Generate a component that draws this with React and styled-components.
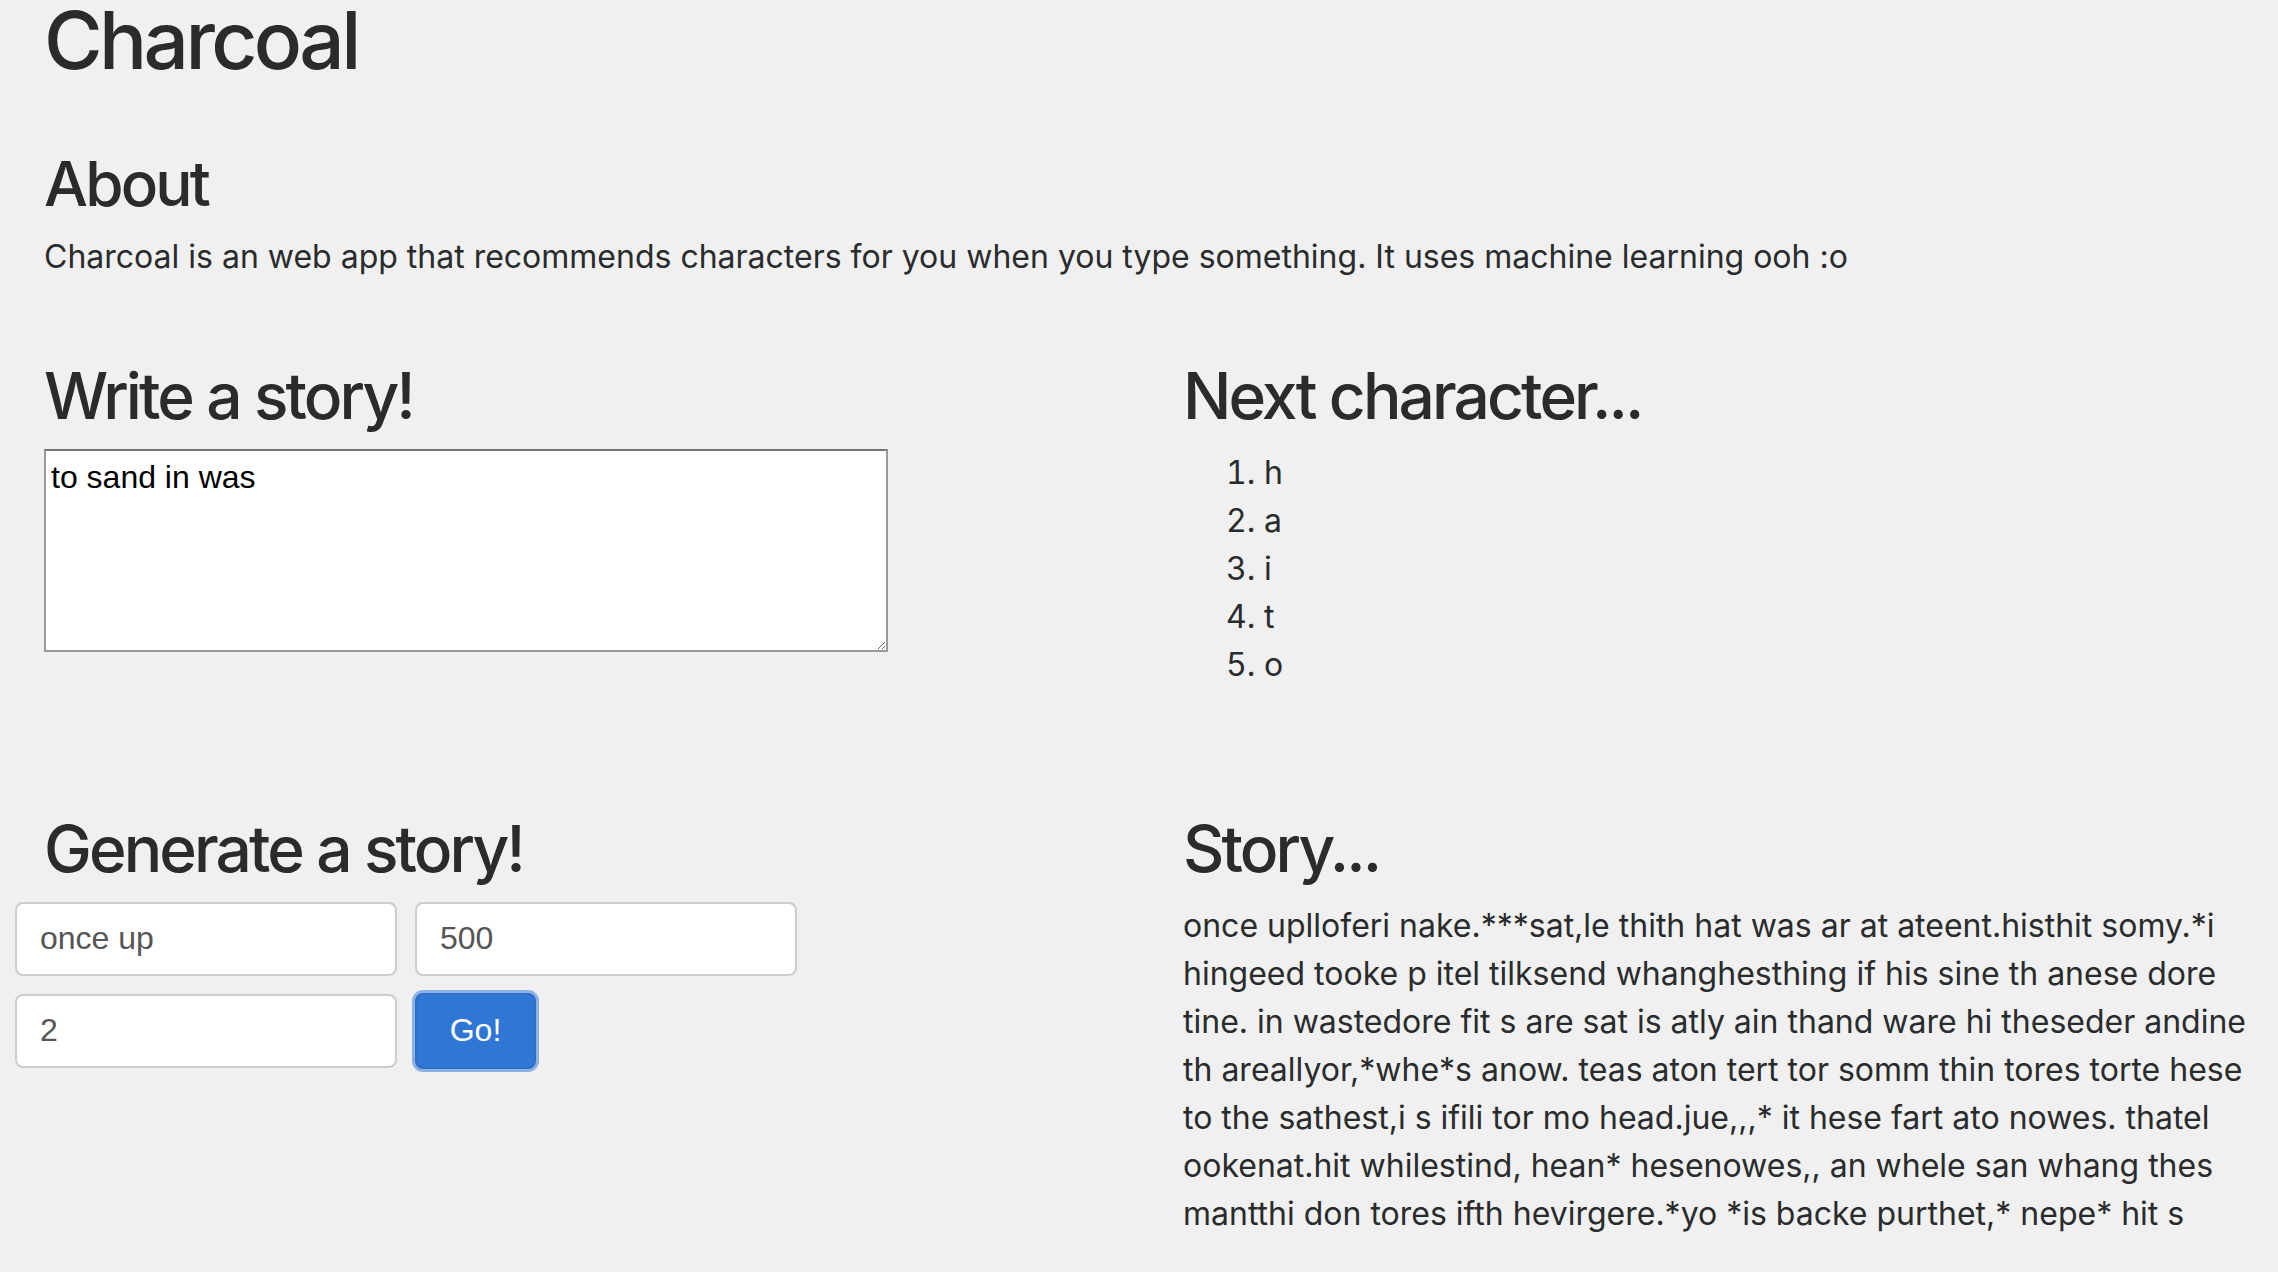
import React from 'react';
import styled, { createGlobalStyle } from 'styled-components';

const GlobalStyle = createGlobalStyle`
  body {
    margin: 0;
    background: #f0f0f0;
    color: #292b2c;
    font-family: Inter, "Noto Sans", sans-serif;
  }
`;

const Page = styled.div`
  width: 2278px;
  height: 1272px;
  overflow: hidden;
`;

const Intro = styled.header`
  padding: 0 44px;
`;

const Title = styled.h1`
  margin: 0;
  font-size: 80px;
  font-weight: 500;
  line-height: 80px;
  letter-spacing: -0.045em;
`;

const Heading = styled.h2`
  margin: 0 0 14px;
  font-size: 64px;
  font-weight: 500;
  line-height: 1.2;
  letter-spacing: -0.045em;
`;

const AboutHeading = styled(Heading)`
  margin-top: 69px;
  font-size: 62px;
  line-height: 70px;
`;

const Text = styled.p`
  margin: 0;
  font-size: 32px;
  line-height: 48px;
`;

const Row = styled.section`
  display: grid;
  grid-template-columns: 1139px 1139px;
  margin-top: ${(p) => p.$top}px;
`;

const Column = styled.div`
  padding: 0 44px;
  min-width: 0;
`;

const StoryInput = styled.textarea`
  display: block;
  box-sizing: border-box;
  width: 844px;
  height: 203px;
  margin: 0;
  padding: 2px 5px;
  border: 2px solid #9a9a9a;
  border-top-color: #747474;
  background: #fff;
  color: #000;
  font-family: "Liberation Sans", Arial, sans-serif;
  font-size: 32px;
  line-height: 48px;
  outline: none;
`;

const Suggestions = styled.ol`
  margin: 0;
  padding-left: 81px;
  font-size: 32px;
  line-height: 48px;
`;

const FormGrid = styled.form`
  display: grid;
  grid-template-columns: 382px 382px;
  grid-auto-rows: 74px;
  gap: 18px;
  margin-left: -29px;
`;

const Field = styled.input`
  box-sizing: border-box;
  width: 100%;
  height: 74px;
  margin: 0;
  padding: 0 23px;
  border: 2px solid #cccccc;
  border-radius: 8px;
  background: #fff;
  color: #555;
  font-family: "Liberation Sans", Arial, sans-serif;
  font-size: 32px;
  outline: none;
`;

const GoButton = styled.button`
  justify-self: start;
  width: 121px;
  height: 76px;
  margin-top: -1px;
  border: 2px solid #2e6fc7;
  border-radius: 8px;
  background: #3076d4;
  color: #fff;
  font-family: "Liberation Sans", Arial, sans-serif;
  font-size: 32px;
  box-shadow: 0 0 0 3px #8db1e5;
  cursor: pointer;
`;

const StoryText = styled.p`
  margin: 0;
  font-size: 32px;
  line-height: 48px;
  white-space: nowrap;
`;

const storyLines = [
  'once uplloferi nake.***sat,le thith hat was ar at ateent.histhit somy.*i',
  'hingeed tooke p itel tilksend whanghesthing if his sine th anese dore',
  'tine. in wastedore fit s are sat is atly ain thand ware hi theseder andine',
  'th areallyor,*whe*s anow. teas aton tert tor somm thin tores torte hese',
  'to the sathest,i s ifili tor mo head.jue,,,* it hese fart ato nowes. thatel',
  'ookenat.hit whilestind, hean* hesenowes,, an whele san whang thes',
  'mantthi don tores ifth hevirgere.*yo *is backe purthet,* nepe* hit s',
];

const nextChars = ['h', 'a', 'i', 't', 'o'];

export default function App() {
  return (
    <Page>
      <GlobalStyle />
      <Intro>
        <Title>Charcoal</Title>
        <AboutHeading>About</AboutHeading>
        <Text>
          Charcoal is an web app that recommends characters for you when you type something. It
          uses machine learning ooh :o
        </Text>
      </Intro>

      <Row $top={77}>
        <Column>
          <Heading>Write a story!</Heading>
          <StoryInput defaultValue="to sand in was" />
        </Column>
        <Column>
          <Heading>Next character...</Heading>
          <Suggestions>
            {nextChars.map((c) => (
              <li key={c}>{c}</li>
            ))}
          </Suggestions>
        </Column>
      </Row>

      <Row $top={122}>
        <Column>
          <Heading>Generate a story!</Heading>
          <FormGrid onSubmit={(e) => e.preventDefault()}>
            <Field defaultValue="once up" />
            <Field defaultValue="500" />
            <Field defaultValue="2" />
            <GoButton type="submit">Go!</GoButton>
          </FormGrid>
        </Column>
        <Column>
          <Heading>Story...</Heading>
          <StoryText>
            {storyLines.map((line, i) => (
              <React.Fragment key={i}>
                {line}
                {i < storyLines.length - 1 && <br />}
              </React.Fragment>
            ))}
          </StoryText>
        </Column>
      </Row>
    </Page>
  );
}
